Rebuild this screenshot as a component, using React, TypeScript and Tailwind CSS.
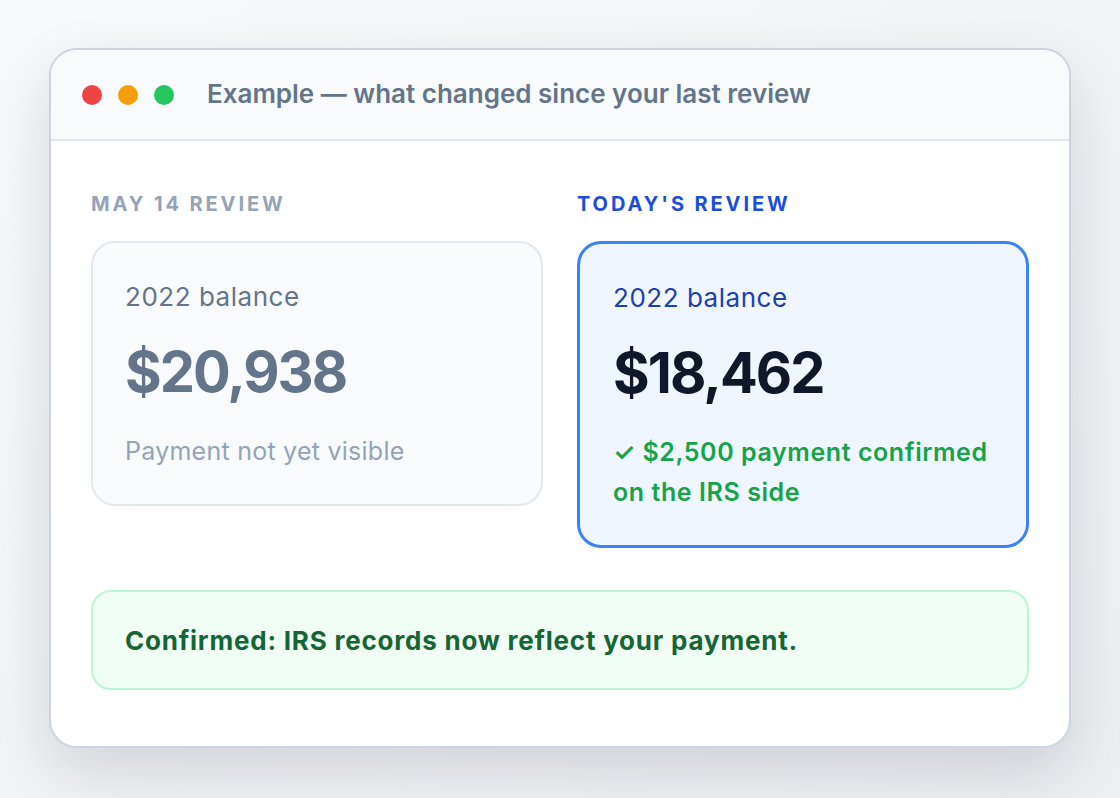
import React from 'react';

const font = { fontFamily: 'Inter, "Noto Sans", "Liberation Sans", sans-serif' };

function Dot({ className }: { className: string }) {
  return <span className={`block h-5 w-5 rounded-full ${className}`} />;
}

function PastCard() {
  return (
    <div className="flex flex-col">
      <div className="h-7 text-[20px] leading-7 font-bold tracking-[0.145em] text-[#94a3b8]">
        MAY 14 REVIEW
      </div>
      <div className="mt-[23px] rounded-[24px] border-2 border-[#e2e8f0] bg-[#f8fafc] px-8 pt-[36px] pb-[35px]">
        <p className="text-[26px] leading-9 tracking-[0.02em] text-[#64748b]">2022 balance</p>
        <p className="mt-[26px] text-[56px] leading-[62px] font-bold tracking-[-0.035em] text-[#64748b]">
          $20,938
        </p>
        <p className="mt-[30px] text-[25px] leading-9 tracking-[0.01em] text-[#94a3b8]">
          Payment not yet visible
        </p>
      </div>
    </div>
  );
}

function TodayCard() {
  return (
    <div className="flex flex-col">
      <div className="h-7 text-[20px] leading-7 font-bold tracking-[0.145em] text-[#1d4ed8]">
        TODAY'S REVIEW
      </div>
      <div className="mt-[23px] rounded-[24px] border-[3px] border-[#3b82f6] bg-[#eff6ff] px-[33px] pt-[36px] pb-[33px]">
        <p className="text-[26px] leading-9 tracking-[0.02em] text-[#1e40af]">2022 balance</p>
        <p className="mt-[26px] text-[56px] leading-[62px] font-bold tracking-[-0.035em] text-[#0f172a]">
          $18,462
        </p>
        <p className="mt-[28px] text-[25px] leading-10 font-semibold tracking-[0.023em] text-[#16a34a]">
          ✓ $2,500 payment confirmed on the IRS side
        </p>
      </div>
    </div>
  );
}

export default function App() {
  return (
    <div
      className="min-h-[798px] w-full bg-gradient-to-br from-[#f8f9fb] to-[#eceef1] px-[49px] pt-[48px] pb-[51px]"
      style={font}
    >
      <div className="overflow-hidden rounded-[28px] border-2 border-[#cbd5e1] bg-white shadow-[0_24px_60px_rgba(15,23,42,0.14)]">
        <div className="flex h-[91px] items-center gap-4 border-b-2 border-[#e2e8f0] bg-[#f8fafc] pl-[31px]">
          <Dot className="bg-[#ef4444]" />
          <Dot className="bg-[#f59e0b]" />
          <Dot className="bg-[#22c55e]" />
          <span className="ml-[17px] -mt-[2px] text-[26px] font-semibold text-[#64748b]">
            Example — what changed since your last review
          </span>
        </div>
        <div className="px-10 pt-[49px] pb-[56px]">
          <div className="grid grid-cols-2 items-start gap-[34px]">
            <PastCard />
            <TodayCard />
          </div>
          <div className="mt-[42px] flex h-[100px] items-center rounded-[20px] border-2 border-[#bbf7d0] bg-[#f0fdf4] px-8">
            <p className="text-[26px] font-bold tracking-[0.03em] text-[#166534]">
              Confirmed: IRS records now reflect your payment.
            </p>
          </div>
        </div>
      </div>
    </div>
  );
}
